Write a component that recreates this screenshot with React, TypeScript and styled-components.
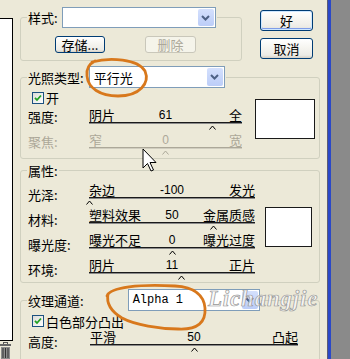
import React from 'react';
import styled, { createGlobalStyle, css } from 'styled-components';

const GlobalStyle = createGlobalStyle`
  html, body {
    margin: 0;
    padding: 0;
    background: #ece9d8;
  }
  body {
    font-family: "Noto Sans CJK SC", "Liberation Sans", sans-serif;
    font-size: 13px;
    color: #000;
  }
`;

const cjk = `"Noto Sans CJK SC", "Liberation Sans", sans-serif`;

const Screen = styled.div`
  position: relative;
  display: flex;
  width: 350px;
  height: 359px;
  overflow: hidden;
  background: #ece9d8;
`;

const LeftStrip = styled.div`
  width: 14px;
  flex-shrink: 0;
  display: flex;
  flex-direction: column;
  padding-top: 18px;
  box-sizing: border-box;
`;

const Preview = styled.div`
  width: 12px;
  height: 321px;
  background: #fff;
  border: 1px solid #000;
  border-left: none;
`;

const Trash = styled.svg`
  margin-top: 1px;
  display: block;
`;

const Dialog = styled.div`
  width: 313px;
  flex-shrink: 0;
  box-sizing: border-box;
  padding: 7px 7px 0 6px;
  display: flex;
  flex-direction: column;
  gap: 5px;
`;

const WindowFrame = styled.div`
  width: 3px;
  flex-shrink: 0;
  background: #2a48c8;
  border-left: 1px solid #5c5c74;
`;

const Desktop = styled.div`
  flex: 1;
  background: #8a8a8a;
`;

const TopRow = styled.div`
  display: flex;
  align-items: flex-start;
  gap: 18px;
`;

const ButtonColumn = styled.div`
  margin-top: 3px;
  display: flex;
  flex-direction: column;
  gap: 7px;
`;

const XPButton = styled.button<{ $w: number; $h: number; $default?: boolean }>`
  width: ${p => p.$w}px;
  height: ${p => p.$h}px;
  box-sizing: border-box;
  padding: 0;
  border: 1px solid #003c74;
  border-radius: 3px;
  background: linear-gradient(180deg, #ffffff 0%, #f6f5f0 45%, #ecebe6 85%, #d6d0c5 100%);
  font-family: ${cjk};
  font-size: 13px;
  line-height: 1;
  color: #000;
  ${p => p.$default && css`
    box-shadow: inset 0 0 0 1px #cee7ff, inset 0 -1px 0 1px #7f9de8;
  `}
  &:disabled {
    border-color: #c9c7ba;
    color: #aca899;
    background: #f5f4ea;
  }
`;

const Group = styled.fieldset<{ $w?: number; $pr: number; $pb: number }>`
  margin: 0;
  ${p => p.$w && `width: ${p.$w}px;`}
  box-sizing: border-box;
  padding: 0 ${p => p.$pr}px ${p => p.$pb}px 7px;
  border: 1px solid #d0d0bf;
  border-radius: 3px;
  min-width: 0;
`;

const Legend = styled.legend`
  padding: 0 1px;
  margin-left: -1px;
`;

const LegendRow = styled.div<{ $gap: number }>`
  display: flex;
  align-items: center;
  gap: ${p => p.$gap}px;
`;

const GroupLabel = styled.span`
  font-size: 13px;
  line-height: 13px;
  white-space: nowrap;
`;

const Combo = styled.div<{ $w: number; $h: number }>`
  width: ${p => p.$w}px;
  height: ${p => p.$h}px;
  box-sizing: border-box;
  border: 1px solid #7f9db9;
  background: #fff;
  display: flex;
  align-items: center;
`;

const ComboText = styled.span<{ $mono?: boolean }>`
  flex: 1;
  padding-left: 4px;
  white-space: nowrap;
  font-family: ${p => (p.$mono ? `"Liberation Mono", monospace` : cjk)};
  font-size: ${p => (p.$mono ? 12 : 13)}px;
`;

const ComboButton = styled.span`
  width: 16px;
  align-self: stretch;
  margin: 1px;
  border-radius: 2px;
  background: linear-gradient(180deg, #d4e0fd 0%, #bccdf8 100%);
  display: flex;
  align-items: center;
  justify-content: center;
`;

const ButtonRow = styled.div`
  display: flex;
  gap: 40px;
  margin-top: 8px;
  padding-left: 27px;
`;

const Body = styled.div<{ $top: number }>`
  display: flex;
  align-items: flex-start;
  margin-top: ${p => p.$top}px;
`;

const Rows = styled.div<{ $gap: number }>`
  display: flex;
  flex-direction: column;
  gap: ${p => p.$gap}px;
`;

const CheckRow = styled.div<{ $h: number }>`
  height: ${p => p.$h}px;
  display: flex;
  align-items: center;
  gap: 2px;
  padding-left: 4px;
  font-size: 13px;
  line-height: 13px;
`;

const CheckBox = styled.span`
  width: 12px;
  height: 12px;
  box-sizing: border-box;
  border: 1px solid #1c5180;
  background: linear-gradient(135deg, #dcdcd7 0%, #ffffff 100%);
  display: flex;
  align-items: center;
  justify-content: center;
`;

const Row = styled.div`
  display: flex;
`;

const RowLabel = styled.span<{ $w: number; $top: number; $off?: boolean }>`
  width: ${p => p.$w}px;
  flex-shrink: 0;
  padding-top: ${p => p.$top}px;
  font-size: 13px;
  line-height: 15px;
  color: ${p => (p.$off ? '#aca899' : '#000')};
`;

const SliderBox = styled.div<{ $w: number }>`
  width: ${p => p.$w}px;
  display: flex;
  flex-direction: column;
`;

const SliderText = styled.div<{ $off?: boolean }>`
  display: grid;
  grid-template-columns: 1fr auto 1fr;
  align-items: end;
  height: 15px;
  line-height: 14px;
  color: ${p => (p.$off ? '#aca899' : '#000')};
`;

const EndText = styled.span<{ $right?: boolean }>`
  justify-self: ${p => (p.$right ? 'end' : 'start')};
  font-size: 13px;
  white-space: nowrap;
`;

const ValueText = styled.span`
  font-family: "Liberation Sans", sans-serif;
  font-size: 12px;
`;

const Track = styled.div<{ $off?: boolean }>`
  position: relative;
  height: 1px;
  background: ${p => (p.$off ? '#aca899' : '#1a1a1a')};
  border-bottom: 1px solid ${p => (p.$off ? '#d0cdbf' : '#8a8a8a')};
  margin-bottom: 5px;
`;

const Thumb = styled.svg<{ $off?: boolean }>`
  position: absolute;
  top: 3px;
  width: 7px;
  height: 5px;
  polyline {
    fill: none;
    stroke: ${p => (p.$off ? '#aca899' : '#000')};
    stroke-width: 1;
  }
`;

const Swatch = styled.div<{ $w: number; $h: number; $top: number; $left: number }>`
  width: ${p => p.$w}px;
  height: ${p => p.$h}px;
  box-sizing: border-box;
  margin-top: ${p => p.$top}px;
  margin-left: ${p => p.$left}px;
  background: #fff;
  border: 1px solid #1a1a1a;
  flex-shrink: 0;
`;

const Overlay = styled.svg`
  position: absolute;
  left: 0;
  top: 0;
  pointer-events: none;
`;

const Watermark = styled.span`
  position: absolute;
  left: 208px;
  top: 286px;
  font-family: "Liberation Serif", serif;
  font-style: italic;
  font-weight: bold;
  font-size: 23px;
  letter-spacing: 0.8px;
  color: rgba(248, 248, 248, 0.8);
  -webkit-text-stroke: 0.7px #969696;
  pointer-events: none;
`;

const Chevron = () => (
  <svg width="9" height="6" viewBox="0 0 9 6">
    <polyline points="1,1 4.5,4.5 8,1" fill="none" stroke="#4d6185" strokeWidth="2" />
  </svg>
);

const Dropdown = ({ w, h, text, mono }: { w: number; h: number; text?: string; mono?: boolean }) => (
  <Combo $w={w} $h={h}>
    <ComboText $mono={mono}>{text}</ComboText>
    <ComboButton>
      <Chevron />
    </ComboButton>
  </Combo>
);

const Check = ({ label, h }: { label: string; h: number }) => (
  <CheckRow $h={h}>
    <CheckBox>
      <svg width="8" height="8" viewBox="0 0 8 8">
        <polyline points="1,3.8 3,6 7,1.5" fill="none" stroke="#21a121" strokeWidth="1.8" />
      </svg>
    </CheckBox>
    <span>{label}</span>
  </CheckRow>
);

interface SliderProps {
  label: string;
  labelWidth: number;
  labelTop: number;
  width: number;
  left: string;
  right: string;
  value: number;
  min?: number;
  max?: number;
  disabled?: boolean;
}

const SliderRow = ({ label, labelWidth, labelTop, width, left, right, value, min = -100, max = 100, disabled }: SliderProps) => {
  const pct = ((value - min) / (max - min)) * 100;
  return (
    <Row>
      <RowLabel $w={labelWidth} $top={labelTop} $off={disabled}>{label}</RowLabel>
      <SliderBox $w={width}>
        <SliderText $off={disabled}>
          <EndText>{left}</EndText>
          <ValueText>{value}</ValueText>
          <EndText $right>{right}</EndText>
        </SliderText>
        <Track $off={disabled}>
          <Thumb $off={disabled} viewBox="0 0 7 5" style={{ left: `calc(${pct}% - 3.5px)` }}>
            <polyline points="0.5,4.5 3.5,1 6.5,4.5" />
          </Thumb>
        </Track>
      </SliderBox>
    </Row>
  );
};

const properties = [
  { label: '光泽:', left: '杂边', right: '发光', value: -100 },
  { label: '材料:', left: '塑料效果', right: '金属质感', value: 50 },
  { label: '曝光度:', left: '曝光不足', right: '曝光过度', value: 0 },
  { label: '环境:', left: '阴片', right: '正片', value: 11 },
];

export default function App() {
  return (
    <>
      <GlobalStyle />
      <Screen>
        <LeftStrip>
          <Preview />
          <Trash width="11" height="17" viewBox="0 0 11 17">
            <rect x="3.5" y="0.5" width="4" height="2" fill="none" stroke="#555" />
            <rect x="0" y="2" width="11" height="2" fill="#666" />
            <rect x="1" y="5" width="9" height="12" fill="#8c8c8c" />
            <path d="M3 6v10M5.5 6v10M8 6v10" stroke="#333" strokeWidth="1" />
          </Trash>
        </LeftStrip>

        <Dialog>
          <TopRow>
            <Group $w={222} $pr={7} $pb={7}>
              <Legend>
                <LegendRow $gap={4}>
                  <GroupLabel>样式:</GroupLabel>
                  <Dropdown w={154} h={21} />
                </LegendRow>
              </Legend>
              <ButtonRow>
                <XPButton $w={50} $h={17}>存储...</XPButton>
                <XPButton $w={51} $h={17} disabled>删除</XPButton>
              </ButtonRow>
            </Group>
            <ButtonColumn>
              <XPButton $w={53} $h={21} $default>好</XPButton>
              <XPButton $w={53} $h={21}>取消</XPButton>
            </ButtonColumn>
          </TopRow>

          <Group $pr={4} $pb={4}>
            <Legend>
              <LegendRow $gap={5}>
                <GroupLabel>光照类型:</GroupLabel>
                <Dropdown w={136} h={22} text="平行光" />
              </LegendRow>
            </Legend>
            <Body $top={3}>
              <Rows $gap={3}>
                <Check label="开" h={13} />
                <SliderRow label="强度:" labelWidth={61} labelTop={2} width={153} left="阴片" right="全" value={61} />
                <SliderRow label="聚焦:" labelWidth={61} labelTop={2} width={153} left="窄" right="宽" value={0} disabled />
              </Rows>
              <Swatch $w={60} $h={40} $top={8} $left={13} />
            </Body>
          </Group>

          <Group $pr={7} $pb={3}>
            <Legend>
              <LegendRow $gap={0}>
                <GroupLabel>属性:</GroupLabel>
              </LegendRow>
            </Legend>
            <Body $top={5}>
              <Rows $gap={3}>
                {properties.map(p => (
                  <SliderRow key={p.label} label={p.label} labelWidth={61} labelTop={5} width={166} left={p.left} right={p.right} value={p.value} />
                ))}
              </Rows>
              <Swatch $w={47} $h={40} $top={25} $left={10} />
            </Body>
          </Group>

          <Group $pr={7} $pb={10} style={{ marginTop: 1 }}>
            <Legend>
              <LegendRow $gap={44}>
                <GroupLabel>纹理通道:</GroupLabel>
                <Dropdown w={132} h={22} text="Alpha 1" mono />
              </LegendRow>
            </Legend>
            <Body $top={3}>
              <Rows $gap={1}>
                <Check label="白色部分凸出" h={14} />
                <SliderRow label="高度:" labelWidth={62} labelTop={5} width={208} left="平滑" right="凸起" value={50} min={0} max={100} />
              </Rows>
            </Body>
          </Group>
        </Dialog>

        <WindowFrame />
        <Desktop />

        <Watermark>Lichangjie</Watermark>
        <Overlay width="350" height="359" viewBox="0 0 350 359">
          <g fill="none" stroke="#d8781c" strokeWidth="2.8" strokeLinecap="round">
            <path d="M92 62 C110 57 138 59 145 71 C150 83 140 96 118 96 C100 96 88 88 87 76 C86 68 89 64 95 61" />
            <path d="M107 296 C110 287 140 284 175 286 C195 287 204 296 205 308 C206 322 198 330 178 329 C160 329 135 325 122 318 C112 312 106 304 108 294" />
          </g>
          <path
            d="M143 149 L143 168 L147.5 163.5 L151 171 L153.5 170 L150 162.5 L156 162.5 Z"
            fill="#fff"
            stroke="#000"
            strokeWidth="1"
            strokeLinejoin="round"
          />
        </Overlay>
      </Screen>
    </>
  );
}
